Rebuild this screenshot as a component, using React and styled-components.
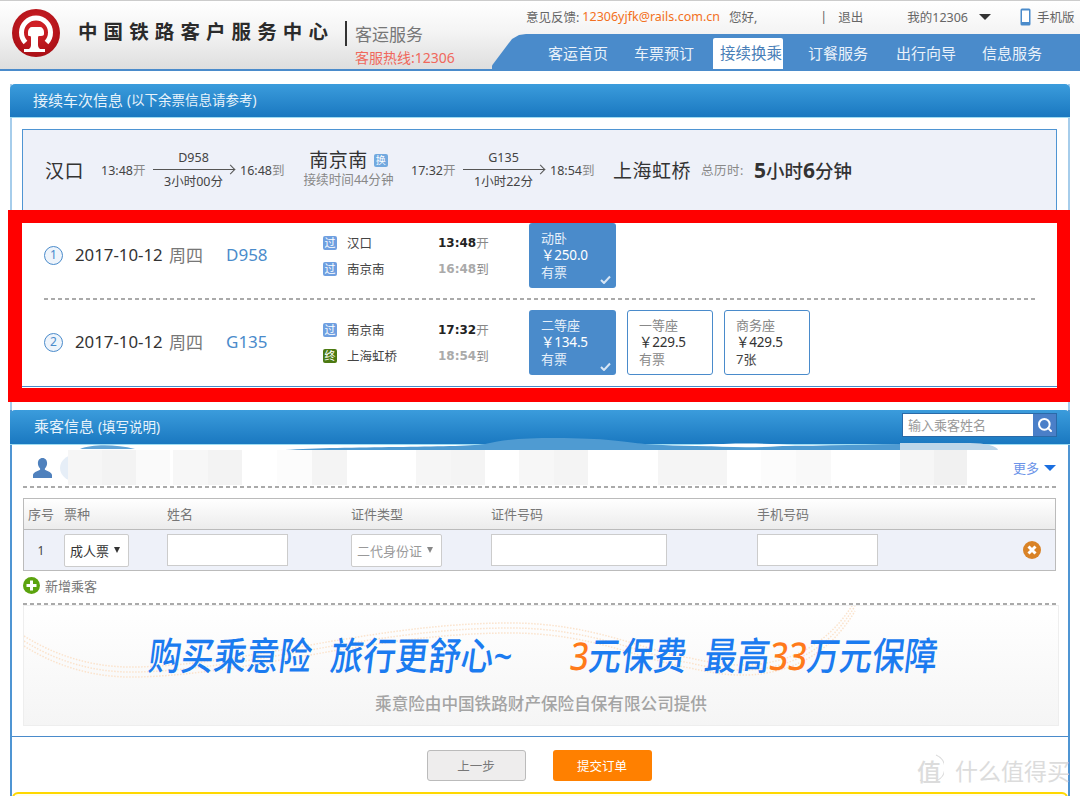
import React from 'react';
import styled, { createGlobalStyle } from 'styled-components';
import { Search } from 'lucide-react';

const sans = '"Noto Sans", "Liberation Sans", "Noto Sans CJK SC", sans-serif';

const GlobalStyle = createGlobalStyle`
  * { box-sizing: border-box; }
  body { margin: 0; background: #fff; font-family: ${sans}; color: #333; }
`;

const Page = styled.div`
  position: relative;
  width: 1080px;
  height: 796px;
  overflow: hidden;
  background: #fff;
`;

/* ---- header ---- */
const TopBar = styled.header`
  display: flex;
  justify-content: space-between;
  height: 71px;
  background: linear-gradient(#fff 0%, #f4f4f4 45%, #dedede 100%);
  border-top: 1px solid #ccc;
  border-bottom: 2px solid #4a8bcb;
`;
const Brand = styled.div`
  display: flex;
  align-items: flex-start;
  padding-left: 12px;
`;
const BrandName = styled.div`
  margin: 19px 0 0 18px;
  width: 256px;
  font-size: 19.5px;
  line-height: 24px;
  font-weight: 700;
  letter-spacing: 6.1px;
  color: #2b2b2b;
  white-space: nowrap;
`;
const BrandRule = styled.div`
  width: 2px;
  height: 25px;
  margin: 20px 8px 0 11px;
  background: #333;
`;
const BrandSub = styled.div`
  display: flex;
  flex-direction: column;
  padding-top: 22px;
`;
const ServiceName = styled.div`
  font-size: 17px;
  line-height: 23px;
  color: #777;
`;
const Hotline = styled.div`
  font-size: 14px;
  line-height: 20px;
  margin-top: 2px;
  color: #f0685c;
`;
const Account = styled.div`
  width: 588px;
  display: flex;
  flex-direction: column;
`;
const TopLinks = styled.div`
  display: flex;
  align-items: center;
  height: 33px;
  padding: 0 0 2px 34px;
  font-size: 12.5px;
  color: #666;
  white-space: nowrap;
`;
const TopLink = styled.span`
  margin-left: ${(p) => p.$gap || 0}px;
  color: ${(p) => p.$color || '#666'};
`;
const Caret = styled.span`
  width: 0;
  height: 0;
  margin-left: ${(p) => p.$gap || 0}px;
  border-left: ${(p) => p.$w}px solid transparent;
  border-right: ${(p) => p.$w}px solid transparent;
  border-top: ${(p) => p.$h}px solid ${(p) => p.$color};
`;
const Nav = styled.nav`
  display: grid;
  grid-template-columns: 86px 84px 90px 88px 86px 70px;
  height: 35px;
  padding: 4px 0 0 51px;
  background: #4a8bcb;
  clip-path: polygon(0 100%, 0 90%, 20px 14%, 27px 3%, 34px 0, 100% 0, 100% 100%);
`;
const NavItem = styled.a`
  width: 70px;
  height: 31px;
  line-height: 30px;
  text-align: ${(p) => (p.$active ? 'right' : 'center')};
  padding-right: ${(p) => (p.$active ? 1 : 0)}px;
  font-size: ${(p) => (p.$active ? 15.5 : 15)}px;
  border-radius: 2px 2px 0 0;
  color: ${(p) => (p.$active ? '#4a7fb8' : '#eaf2fa')};
  background: ${(p) => (p.$active ? '#fff' : 'transparent')};
`;

/* ---- main column ---- */
const Main = styled.main`
  width: 1060px;
  margin: 13px 0 0 10px;
  border-style: solid;
  border-width: 0 2px;
  border-image: linear-gradient(#a6cdeb 0 326px, #4f95d3 326px) 1;
`;
const PanelTitle = styled.div`
  position: relative;
  display: flex;
  align-items: center;
  height: ${(p) => p.$height}px;
  margin: 0 -2px;
  padding: 0 0 3px ${(p) => p.$indent}px;
  background: linear-gradient(#3b9cdc, #1a78c0);
  border-bottom: 1px solid #9fdcf2;
  border-radius: 5px 5px 0 0;
  color: #e8f3fb;
  font-size: 15px;
`;
const TitleNote = styled.span`
  font-size: 13.5px;
  margin-left: 4px;
`;

/* ---- trip summary ---- */
const Summary = styled.section`
  display: flex;
  align-items: center;
  height: 81px;
  margin: 11px 11px 0 10px;
  padding: 0 0 1px 22px;
  background: #eef1f9;
  border: 1px solid #4f95d3;
  border-bottom: 0;
  white-space: nowrap;
`;
const Station = styled.span`
  font-size: 19px;
  letter-spacing: 0.5px;
  color: #333;
`;
const Leg = styled.div`
  display: flex;
  align-items: center;
  gap: 6px;
  margin: 0 17px;
`;
const Clock = styled.span`
  font-size: 12.5px;
  color: #444;
  width: 46px;
`;
const Unit = styled.span`
  color: #888;
`;
const LegLine = styled.div`
  position: relative;
  width: 81px;
  text-align: center;
  font-size: 12.5px;
  line-height: 20px;
  color: #444;
`;
const LegRule = styled.div`
  height: 1px;
  margin: 1px 0 2px;
  background: #555;
  &::after {
    content: '';
    position: absolute;
    right: 0;
    top: 18px;
    width: 6px;
    height: 6px;
    border-right: 1px solid #555;
    border-top: 1px solid #555;
    transform: rotate(45deg);
  }
`;
const Transfer = styled.div`
  width: 91px;
  text-align: center;
  line-height: 19px;
`;
const TransferStation = styled.div`
  display: flex;
  justify-content: center;
  align-items: center;
  gap: 6px;
  height: 20px;
`;
const TransferTag = styled.span`
  width: 14px;
  height: 13px;
  line-height: 13px;
  border-radius: 2px;
  font-size: 10px;
  color: #fff;
  background: #72a9df;
`;
const TransferWait = styled.div`
  font-size: 12.6px;
  color: #888;
`;
const TotalLabel = styled.span`
  margin-left: 10px;
  font-size: 12.5px;
  letter-spacing: 0.5px;
  color: #888;
  width: 53px;
`;
const TotalValue = styled.span`
  font-size: 18.5px;
  font-weight: 500;
  color: #333;
  & b {
    font-weight: 700;
    font-size: 21px;
  }
`;

/* ---- red highlighted block ---- */
const Highlight = styled.section`
  width: 1062px;
  margin-left: -4px;
  background: #fff;
  border: solid #f00;
  border-width: 13px 13px 14px 14px;
`;
const TrainList = styled.div`
  height: 164px;
  margin-bottom: 1px;
  background: #fff;
  border-bottom: 1px solid #4a8bcb;
  padding: 0 22px;
`;
const TrainRow = styled.div`
  display: flex;
  height: ${(p) => p.$height}px;
  padding-top: ${(p) => p.$top}px;
`;
const TrainMeta = styled.div`
  display: flex;
  align-items: center;
  width: 485px;
  height: 65px;
  white-space: nowrap;
`;
const Seq = styled.span`
  width: 19px;
  height: 19px;
  line-height: 16px;
  border-radius: 50%;
  border: 1.5px solid #4a8bcb;
  background: #eef4fb;
  color: #4a8bcb;
  text-align: center;
  font-size: 12px;
`;
const TrainInfo = styled.div`
  display: flex;
  align-items: center;
  margin-top: -2px;
`;
const TrainDate = styled.span`
  width: 94px;
  margin-left: 12px;
  font-size: 16.8px;
  color: #333;
`;
const Weekday = styled.span`
  width: 57px;
  font-size: 17px;
  color: #777;
`;
const TrainCode = styled.span`
  width: 97px;
  font-size: 17px;
  color: #4a8bcb;
`;
const Stops = styled.div`
  display: flex;
  flex-direction: column;
  gap: 12px;
`;
const Stop = styled.div`
  display: flex;
  align-items: center;
  height: 14px;
  font-size: 12.5px;
`;
const StopBadge = styled.span`
  width: 14px;
  height: 14px;
  line-height: 14px;
  margin-right: 10px;
  border-radius: 2px;
  text-align: center;
  font-size: 11px;
  color: #fff;
  background: ${(p) => (p.$end ? '#4c7a12' : '#6f9fe0')};
`;
const StopName = styled.span`
  width: 91px;
  color: #444;
`;
const StopTime = styled.span`
  font-family: "DejaVu Sans", sans-serif;
  font-weight: 700;
  font-size: 12px;
  color: ${(p) => (p.$muted ? '#aaa' : '#222')};
`;
const Fares = styled.div`
  display: flex;
  gap: 11px;
`;
const FareCard = styled.div`
  position: relative;
  width: ${(p) => (p.$selected ? 87 : 86)}px;
  height: 65px;
  padding: ${(p) => (p.$selected ? '7px 0 0 12px' : '6px 0 0 11px')};
  border-radius: 3px;
  border: ${(p) => (p.$selected ? '0' : '1px solid #4a8bcb')};
  background: ${(p) => (p.$selected ? '#4a8bcb' : '#fff')};
  color: ${(p) => (p.$selected ? '#e6f0fa' : '#888')};
  font-size: 13px;
  line-height: 17px;
  white-space: nowrap;
`;
const FarePrice = styled.div`
  font-size: 13.5px;
  letter-spacing: -0.2px;
  color: ${(p) => (p.$selected ? '#fff' : '#333')};
`;
const FareLeft = styled.div`
  color: ${(p) => (p.$few ? '#444' : 'inherit')};
`;
const FareCheck = styled.svg`
  position: absolute;
  right: 5px;
  bottom: 4px;
`;
const DashRule = styled.div`
  height: 2px;
  margin: ${(p) => p.$margin || '0'};
  background: repeating-linear-gradient(90deg, #aaa 0 4px, transparent 4px 7px);
`;

/* ---- passengers ---- */
const PassengerPanel = styled.section`
  margin-top: 8px;
  padding-bottom: 10px;
  border-bottom: 1px solid #4a8bcb;
`;
const NameSearch = styled.div`
  position: absolute;
  top: 3px;
  right: 13px;
  display: flex;
  height: 24px;
  border: 1px solid #2a6aa8;
`;
const NameInput = styled.input`
  width: 130px;
  height: 22px;
  padding: 0 5px;
  border: 0;
  outline: 0;
  font-size: 13px;
  font-family: ${sans};
  &::placeholder { color: #999; }
`;
const NameButton = styled.span`
  display: flex;
  align-items: center;
  justify-content: center;
  width: 23px;
  background: #4a7fc8;
  color: #fff;
`;
const Saved = styled.div`
  position: relative;
  display: flex;
  align-items: center;
  justify-content: space-between;
  height: 41px;
  padding: 4px 12px 0 21px;
`;
const SavedSmear = styled.svg`
  position: absolute;
  left: 0;
  top: -9px;
`;
const More = styled.span`
  position: relative;
  display: flex;
  align-items: center;
  gap: 5px;
  font-size: 13px;
  color: #6b93e8;
`;
const PassengerTable = styled.div`
  height: 73px;
  margin: 10px 12px 0 11px;
  border: 1px solid #bbb;
`;
const TableHead = styled.div`
  display: grid;
  grid-template-columns: 36px 103px 184px 140px 266px 1fr;
  align-items: center;
  height: 31px;
  padding: 0 0 2px 4px;
  background: linear-gradient(#fff, #ececec);
  border-bottom: 1px solid #bbb;
  font-size: 13px;
  color: #777;
`;
const TableRow = styled(TableHead)`
  height: 40px;
  padding: 0;
  grid-template-columns: 40px 103px 184px 140px 266px 266px 1fr;
  background: #eef1f9;
  border-bottom: 0;
`;
const RowNumber = styled.span`
  text-align: center;
  font-size: 12px;
  color: #444;
  padding-right: 6px;
`;
const FakeSelect = styled.div`
  display: flex;
  align-items: center;
  justify-content: space-between;
  width: ${(p) => p.$width}px;
  height: 33px;
  padding: 0 8px 0 5px;
  background: #fff;
  border: 1px solid #ccc;
  border-radius: 2px;
  font-size: 13px;
  white-space: nowrap;
  color: ${(p) => (p.$disabled ? '#999' : '#333')};
`;
const FieldInput = styled.input`
  display: block;
  width: ${(p) => p.$width}px;
  height: 32px;
  border: 1px solid #ccc;
  background: #fff;
  outline: 0;
`;
const RemoveCell = styled.span`
  display: flex;
  justify-content: flex-end;
  padding-right: 14px;
`;
const AddRow = styled.div`
  display: flex;
  align-items: center;
  gap: 5px;
  height: 32px;
  margin-left: 11px;
  padding-bottom: 3px;
  font-size: 13px;
  color: #777;
`;

/* ---- insurance banner ---- */
const Banner = styled.div`
  position: relative;
  height: 121px;
  margin: 0 9px 0 11px;
  background: linear-gradient(#fff, #f5f5f5);
  border: 1px solid #eee;
  overflow: hidden;
`;
const BannerWaves = styled.svg`
  position: absolute;
  left: 0;
  top: 0;
`;
const BannerHead = styled.div`
  position: relative;
  display: flex;
  padding: 28px 0 0 125px;
  font-size: 32.6px;
  font-weight: 500;
  line-height: 44px;
  color: #1b7bf0;
  white-space: nowrap;
  transform: skewX(-7deg) scaleY(1.18);
  transform-origin: 126px 50px;
`;
const BannerPart = styled.span`
  margin-left: ${(p) => p.$gap || 0}px;
`;
const Orange = styled.span`
  color: #ff7a1a;
`;
const BannerNote = styled.div`
  position: relative;
  margin-top: 13px;
  text-align: center;
  font-size: 16.6px;
  font-weight: 500;
  color: #a4a4a4;
`;

/* ---- actions ---- */
const Actions = styled.div`
  display: flex;
  justify-content: center;
  gap: 27px;
  margin: 13px 0 0 -2px;
`;
const ActionButton = styled.button`
  width: 99px;
  height: 31px;
  border-radius: 3px;
  font-family: ${sans};
  font-size: 12.5px;
  border: ${(p) => (p.$primary ? '0' : '1px solid #bbb')};
  background: ${(p) => (p.$primary ? '#ff8000' : '#eeeded')};
  color: ${(p) => (p.$primary ? '#fff' : '#777')};
`;
const Notice = styled.div`
  height: 30px;
  margin-top: 11px;
  border: 2px solid #ffd800;
  border-radius: 6px;
  background: #fffdf0;
`;
const Watermark = styled.div`
  position: absolute;
  left: 914px;
  top: 755px;
  display: flex;
  align-items: center;
  gap: 11px;
  height: 30px;
  color: #dcdcdc;
  font-size: 23px;
  white-space: nowrap;
`;
const WatermarkMark = styled.span`
  position: relative;
  width: 30px;
  font-size: 24px;
  font-weight: 500;
  text-align: center;
  & svg { position: absolute; left: 0; top: 0; }
`;

function Logo() {
  return (
    <svg width="48" height="48" viewBox="0 0 48 48" style={{ marginTop: 8 }}>
      <defs>
        <radialGradient id="logoRed" cx="50%" cy="40%" r="60%">
          <stop offset="0%" stopColor="#d8242a" />
          <stop offset="100%" stopColor="#a90f16" />
        </radialGradient>
      </defs>
      <circle cx="24" cy="24" r="24" fill="url(#logoRed)" />
      <path d="M13.500 33.500 A14.500 14.500 0 1 1 34.500 33.500" fill="none" stroke="#fff" strokeWidth="5" />
      <path d="M16 23c0-3 2-5 4-5h8c2 0 4 2 4 5v2c0 1-1 2-3 2h-2c-1 0-1 1-1 3v6c0 2 1 3 2 4h5v3H12v-3h5c1-1 2-2 2-4v-6c0-2 0-3-1-3h-1c-1 0-1-1-1-2z" fill="#fff" />
    </svg>
  );
}

function PhoneIcon() {
  return (
    <svg width="11" height="18" viewBox="0 0 11 18" style={{ marginLeft: 29, marginRight: 6 }}>
      <rect x="0.5" y="0.5" width="10" height="17" rx="1.5" fill="#4a8bcb" />
      <rect x="2" y="2.5" width="7" height="11.5" fill="#fff" />
    </svg>
  );
}

function PersonIcon() {
  return (
    <svg width="19" height="20" viewBox="0 0 19 20" style={{ position: 'relative' }}>
      <path d="M9.500 0c3 0 4.600 2.400 4.600 5.200 0 2-.8 3.800-2 5-.5.600-.4 1.500.3 1.900 2.600 1.300 6.600 2.400 6.600 5.200V20H0v-2.700c0-2.800 4-3.900 6.600-5.200.7-.4.800-1.300.3-1.900-1.200-1.200-2-3-2-5C4.900 2.400 6.500 0 9.500 0z" fill="#4f81bd" />
    </svg>
  );
}

function RemoveIcon() {
  return (
    <svg width="18" height="18" viewBox="0 0 18 18">
      <circle cx="9" cy="9" r="9" fill="#d98327" />
      <path d="M5.500 5.500l7 7M12.500 5.500l-7 7" stroke="#fff" strokeWidth="3" />
    </svg>
  );
}

function AddIcon() {
  return (
    <svg width="17" height="17" viewBox="0 0 17 17">
      <circle cx="8.500" cy="8.500" r="8.500" fill="#5ba30e" />
      <path d="M8.500 3.500v10M3.500 8.500h10" stroke="#fff" strokeWidth="3" />
    </svg>
  );
}

function CheckMark() {
  return (
    <FareCheck width="11" height="9" viewBox="0 0 11 9">
      <path d="M1 5l3 3 6-6.500" fill="none" stroke="#d8e6f5" strokeWidth="2" />
    </FareCheck>
  );
}

// the blurred-out passenger names and the wave behind them
function NameSmear() {
  const blocks = [
    [68, 34, '#f6f6f6'], [102, 34, '#f3f3f3'], [136, 34, '#fafafa'], [173, 35, '#f7f7f7'], [208, 34, '#f3f3f3'],
    [277, 35, '#fcfcfc'], [312, 35, '#f4f4f4'], [416, 35, '#f6f6f6'], [451, 34, '#f4f4f4'],
    [519, 35, '#f7f7f7'], [554, 34, '#f4f4f4'], [658, 69, '#f5f5f5'], [761, 35, '#fcfcfc'], [796, 35, '#f9f9f9'],
    [900, 34, '#f6f6f6'], [934, 33, '#f1f1f1'],
  ];
  return (
    <SavedSmear width="1056" height="52" viewBox="12 436 1056 52">
      <ellipse cx="80" cy="468" rx="20" ry="15" fill="#e6eef7" />
      <path d="M80 449c12-5 35-5 55 0z" fill="#62a4d6" />
      <path d="M285 450c60-4 170-2 200-6 20-5 40-6 70-6 50 0 70 4 90 6 50 4 160 2 255 0 30 0 70 2 95 6z" fill="#4f9bd2" />
      <path d="M700 445c30 3 60 3 95 0-30-2-65-2-95 0z" fill="#fff" />
      <path d="M900 443h70c15 0 27 3 28 7H900z" fill="#bcd6e9" />
      {blocks.map(([x, w, fill]) => (
        <rect key={x} x={x} y="450" width={w} height="35" fill={fill} />
      ))}
    </SavedSmear>
  );
}

function Waves() {
  const dots = { fill: 'none', stroke: '#fbe3cc', strokeWidth: 1.5, strokeDasharray: '1.5 1.5' };
  const line = 'M0 30C40 55 80 62 114 61C230 58 350 17 486 17C570 17 620 45 666 52C700 60 720 60 736 58C780 52 810 30 831 -5';
  return (
    <BannerWaves width="1034" height="118" viewBox="0 0 1034 118">
      <path d={line} style={dots} />
      <path d={line} style={dots} transform="translate(0 5)" />
      <path d={line} style={dots} transform="translate(0 10)" />
    </BannerWaves>
  );
}

function Time({ at, unit }) {
  return (
    <Clock>
      {at}
      <Unit>{unit}</Unit>
    </Clock>
  );
}

function LegInfo({ from, code, span, to }) {
  return (
    <Leg>
      <Time at={from} unit="开" />
      <LegLine>
        {code}
        <LegRule />
        {span}
      </LegLine>
      <Time at={to} unit="到" />
    </Leg>
  );
}

function Fare({ name, price, left, selected, few }) {
  return (
    <FareCard $selected={selected}>
      <div>{name}</div>
      <FarePrice $selected={selected}>￥{price}</FarePrice>
      <FareLeft $few={few}>{left}</FareLeft>
      {selected && <CheckMark />}
    </FareCard>
  );
}

function StopLine({ badge, end, name, time, unit, muted }) {
  return (
    <Stop>
      <StopBadge $end={end}>{badge}</StopBadge>
      <StopName>{name}</StopName>
      <StopTime $muted={muted}>{time}</StopTime>
      <Unit>{unit}</Unit>
    </Stop>
  );
}

export default function App() {
  return (
    <Page>
      <GlobalStyle />
      <TopBar>
        <Brand>
          <Logo />
          <BrandName>中国铁路客户服务中心</BrandName>
          <BrandRule />
          <BrandSub>
            <ServiceName>客运服务</ServiceName>
            <Hotline>客服热线:12306</Hotline>
          </BrandSub>
        </Brand>
        <Account>
          <TopLinks>
            <TopLink>意见反馈:</TopLink>
            <TopLink $gap={3} $color="#f37021">12306yjfk@rails.com.cn</TopLink>
            <TopLink $gap={9}>您好,</TopLink>
            <TopLink $gap={63}>|</TopLink>
            <TopLink $gap={11}>退出</TopLink>
            <TopLink $gap={44}>我的12306</TopLink>
            <Caret $gap={11} $w={6} $h={6} $color="#333" />
            <PhoneIcon />
            <TopLink>手机版</TopLink>
          </TopLinks>
          <Nav>
            <NavItem>客运首页</NavItem>
            <NavItem>车票预订</NavItem>
            <NavItem $active>接续换乘</NavItem>
            <NavItem>订餐服务</NavItem>
            <NavItem>出行向导</NavItem>
            <NavItem>信息服务</NavItem>
          </Nav>
        </Account>
      </TopBar>

      <Main>
        <PanelTitle $height={34} $indent={23}>
          接续车次信息<TitleNote>(以下余票信息请参考)</TitleNote>
        </PanelTitle>
        <Summary>
          <Station>汉口</Station>
          <LegInfo from="13:48" code="D958" span="3小时00分" to="16:48" />
          <Transfer>
            <TransferStation>
              <Station>南京南</Station>
              <TransferTag>换</TransferTag>
            </TransferStation>
            <TransferWait>接续时间44分钟</TransferWait>
          </Transfer>
          <LegInfo from="17:32" code="G135" span="1小时22分" to="18:54" />
          <Station>上海虹桥</Station>
          <TotalLabel>总历时:</TotalLabel>
          <TotalValue><b>5</b>小时<b>6</b>分钟</TotalValue>
        </Summary>

        <Highlight>
          <TrainList>
            <TrainRow $height={75} $top={0}>
              <TrainMeta>
                <Seq>1</Seq>
                <TrainInfo>
                  <TrainDate>2017-10-12</TrainDate>
                  <Weekday>周四</Weekday>
                  <TrainCode>D958</TrainCode>
                </TrainInfo>
                <Stops>
                  <StopLine badge="过" name="汉口" time="13:48" unit="开" />
                  <StopLine badge="过" name="南京南" time="16:48" unit="到" muted />
                </Stops>
              </TrainMeta>
              <Fares>
                <Fare name="动卧" price="250.0" left="有票" selected />
              </Fares>
            </TrainRow>
            <DashRule />
            <TrainRow $height={86} $top={10}>
              <TrainMeta>
                <Seq>2</Seq>
                <TrainInfo>
                  <TrainDate>2017-10-12</TrainDate>
                  <Weekday>周四</Weekday>
                  <TrainCode>G135</TrainCode>
                </TrainInfo>
                <Stops>
                  <StopLine badge="过" name="南京南" time="17:32" unit="开" />
                  <StopLine badge="终" end name="上海虹桥" time="18:54" unit="到" muted />
                </Stops>
              </TrainMeta>
              <Fares>
                <Fare name="二等座" price="134.5" left="有票" selected />
                <Fare name="一等座" price="229.5" left="有票" />
                <Fare name="商务座" price="429.5" left="7张" few />
              </Fares>
            </TrainRow>
          </TrainList>
        </Highlight>

        <PassengerPanel>
          <PanelTitle $height={35} $indent={24}>
            乘客信息<TitleNote>(填写说明)</TitleNote>
            <NameSearch>
              <NameInput placeholder="输入乘客姓名" />
              <NameButton><Search size={16} strokeWidth={3} /></NameButton>
            </NameSearch>
          </PanelTitle>
          <Saved>
            <NameSmear />
            <PersonIcon />
            <More>
              更多
              <Caret $w={6} $h={6} $color="#1a6fe0" />
            </More>
          </Saved>
          <DashRule $margin="0 12px 0 11px" />
          <PassengerTable>
            <TableHead>
              <span>序号</span>
              <span>票种</span>
              <span>姓名</span>
              <span>证件类型</span>
              <span>证件号码</span>
              <span>手机号码</span>
            </TableHead>
            <TableRow>
              <RowNumber>1</RowNumber>
              <FakeSelect $width={65}>成人票<Caret $w={3.5} $h={6} $color="#333" /></FakeSelect>
              <FieldInput $width={121} />
              <FakeSelect $width={91} $disabled>二代身份证<Caret $w={3.5} $h={6} $color="#888" /></FakeSelect>
              <FieldInput $width={176} />
              <FieldInput $width={121} />
              <RemoveCell><RemoveIcon /></RemoveCell>
            </TableRow>
          </PassengerTable>
          <AddRow>
            <AddIcon />
            新增乘客
          </AddRow>
          <DashRule $margin="0 12px 0 11px" />
          <Banner>
            <Waves />
            <BannerHead>
              <BannerPart>购买乘意险</BannerPart>
              <BannerPart $gap={19}>旅行更舒心~</BannerPart>
              <BannerPart $gap={58}><Orange>3</Orange>元保费</BannerPart>
              <BannerPart $gap={18}>最高<Orange>33</Orange>万元保障</BannerPart>
            </BannerHead>
            <BannerNote>乘意险由中国铁路财产保险自保有限公司提供</BannerNote>
          </Banner>
        </PassengerPanel>

        <Actions>
          <ActionButton>上一步</ActionButton>
          <ActionButton $primary>提交订单</ActionButton>
        </Actions>
        <Notice />
      </Main>

      <Watermark>
        <WatermarkMark>
          值
          <svg width="30" height="30" viewBox="0 0 30 30">
            <path d="M22 2a14 14 0 0 1 0 26M6 27a14 14 0 0 0 12 2" fill="none" stroke="#dcdcdc" strokeWidth="1.2" />
          </svg>
        </WatermarkMark>
        什么值得买
      </Watermark>
    </Page>
  );
}
